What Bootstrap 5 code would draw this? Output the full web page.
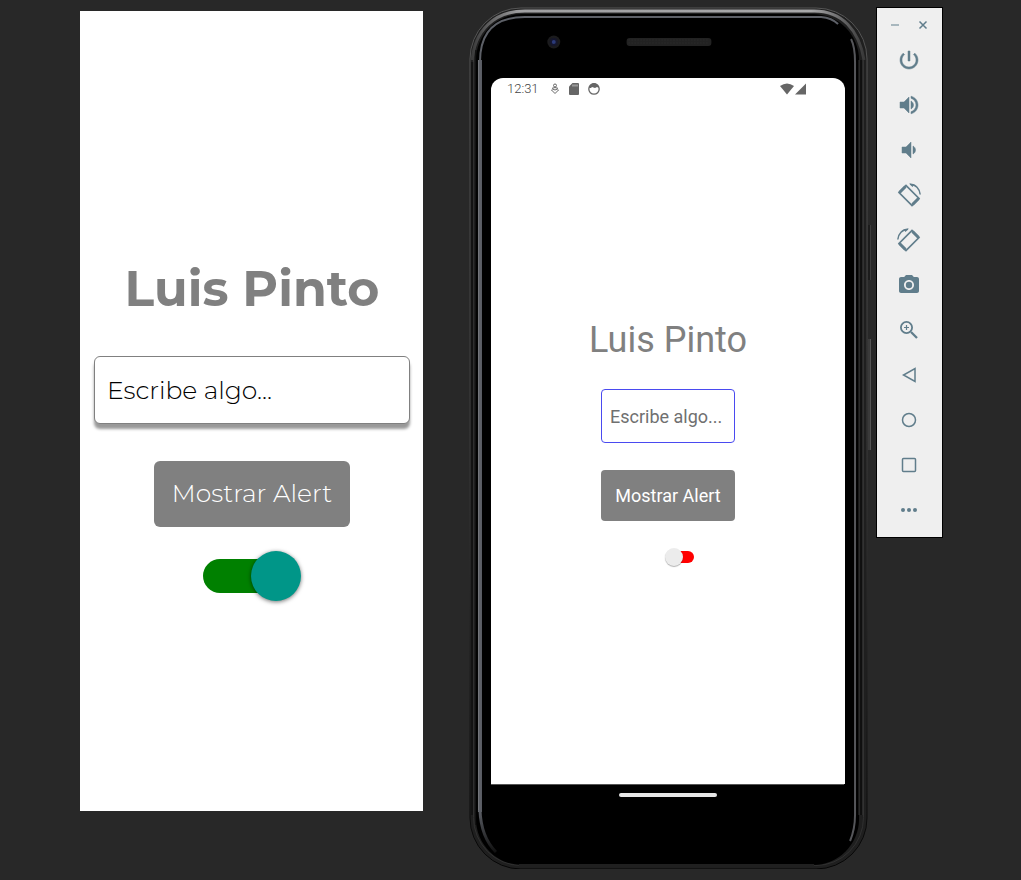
<!DOCTYPE html>
<html lang="es">
<head>
<meta charset="utf-8">
<meta name="viewport" content="width=device-width, initial-scale=1">
<title>Luis Pinto</title>
<link href="https://cdn.jsdelivr.net/npm/bootstrap@5.3.0/dist/css/bootstrap.min.css" rel="stylesheet">
<style>
  body { background: #282828; font-family: Roboto, "Liberation Sans", sans-serif; }
  .desk { display: grid; grid-template-columns: minmax(0, 343fr) minmax(0, 453fr) 67px; padding: 7px 78px 0 80px; min-height: 100vh; align-items: start; }
  .preview { margin-top: 4px; min-height: calc(100vh - 80px); padding: 248px 13px 0 14px; font-family: Montserrat, Inter, sans-serif; }
  .preview h1 { font-size: 49px; line-height: 60px; font-weight: 700; color: #808080; }
  .preview .field { height: 68px; margin-top: 37px; padding: 0 12px; border: 1px solid #808080; border-radius: 6px; font-size: 25px; font-weight: 300; color: #000; box-shadow: 0 5px 3px #999; }
  .preview .field::placeholder { color: #000; opacity: 1; }
  .preview .action { height: 66px; width: 196px; margin-top: 37px; font-size: 25px; font-weight: 300; border-radius: 6px; }
  .action { background: #808080; color: #fff; padding: 0; border: 0; }
  .toggle { appearance: none; position: relative; margin: 0; display: block; }
  .toggle::before, .toggle::after { content: ""; position: absolute; }
  .toggle::after { border-radius: 50%; }
  .toggle-lg { width: 98px; height: 50px; margin-top: 24px; }
  .toggle-lg::before { inset: 8px 10px 8px 0; border-radius: 17px; background: green; }
  .toggle-lg::after { width: 50px; height: 50px; right: 0; background: #009688; box-shadow: 0 1px 4px rgba(0,0,0,.55); }
  .toggle-sm { width: 29px; height: 18px; margin: 27px 0 0 23px; }
  .toggle-sm::before { inset: 3px 0 3px 5px; border-radius: 6px; background: red; }
  .toggle-sm::after { width: 18px; height: 18px; left: 0; background: #ececec; box-shadow: 0 1px 1px rgba(0,0,0,.3); }
  .phone { margin-left: 45px; margin-right: 8px; min-height: calc(100vh - 18px); padding: 71px 23px 0 23px; }
  .frame { z-index: 0; }
  .screen { z-index: 1; background: #fff; border-radius: 12px 12px 0 0; min-height: calc(100vh - 174px); }
  .status { height: 22px; padding: 0 38px 0 16px; font-size: 13px; line-height: 22px; font-weight: 300; color: #444; }
  .screen h2 { font-size: 36px; line-height: 44px; font-weight: 400; color: #808080; margin-top: 218px; }
  .screen .field { width: 134px; height: 54px; margin-top: 27px; padding: 0 8px; border: 1px solid #4a4af0; border-radius: 4px; font-size: 18px; color: #666; }
  .screen .field::placeholder { color: #707070; opacity: 1; }
  .screen .action { width: 134px; height: 51px; margin-top: 27px; font-size: 18px; border-radius: 4px; }
  .homebar { z-index: 1; width: 98px; height: 4px; border-radius: 2px; background: #e6e6e6; margin-top: 9px; }
  .tools { background: #efefef; border: 1px solid #000; height: 531px; padding-right: 2px; color: #607d8b; }
  .tools button { border: 0; background: none; color: inherit; padding: 0; display: flex; align-items: center; justify-content: center; }
  .wide { width: 100%; height: 45px; }
  .slim { width: 28px; height: 25px; }
</style>
</head>
<body>
<main class="desk">
  <section class="preview bg-white d-flex flex-column align-items-center">
    <h1 class="m-0">Luis Pinto</h1>
    <input class="field w-100" type="text" placeholder="Escribe algo..." aria-label="Escribe algo">
    <button type="button" class="btn action">Mostrar Alert</button>
    <input class="toggle toggle-lg" type="checkbox" role="switch" aria-label="Activar" checked>
  </section>

  <section class="phone position-relative d-flex flex-column">
    <svg class="frame position-absolute top-0 start-0 w-100 h-100" viewBox="468 7 401 862" preserveAspectRatio="none" fill="none" aria-hidden="true">
      <defs>
        <linearGradient id="rim" x1="0" y1="0" x2="0" y2="1"><stop offset="0" stop-color="#555"/><stop offset=".5" stop-color="#3b3b3b"/><stop offset="1" stop-color="#050505"/></linearGradient>
        <linearGradient id="shine" x1="468" x2="868" y1="0" y2="0" gradientUnits="userSpaceOnUse"><stop offset="0" stop-color="#333"/><stop offset=".13" stop-color="#a0a0a2"/><stop offset=".86" stop-color="#a8a8aa"/><stop offset="1" stop-color="#333"/></linearGradient>
        <linearGradient id="fade" x1="0" x2="0" y1="810" y2="852" gradientUnits="userSpaceOnUse"><stop offset="0" stop-color="#5d6067"/><stop offset="1" stop-color="#111"/></linearGradient>
      </defs>
      <rect x="470" y="8" width="398" height="861" rx="51" fill="#1f1f1f" stroke="url(#rim)"/>
      <rect x="473.500" y="12.500" width="391" height="853" rx="48" stroke="#303030"/>
      <path d="M472 62C474 30 495 11 525 11H815C843 11 860 30 865 60" stroke="url(#shine)" stroke-width="3"/>
      <rect x="476" y="14" width="384" height="851" rx="46" fill="#000"/>
      <path d="M480 62Q480 17 525 17H822Q833 18 839 24" stroke="#5d6067" stroke-width="2"/>
      <path d="M480 60V812" stroke="#5d6067" stroke-width="4"/>
      <path d="M478.500 60V812" stroke="#74767b"/>
      <path d="M480 810Q481 837 496 852" stroke="url(#fade)" stroke-width="3"/>
      <path d="M852 39Q856 47 856 62V815Q856 829 851 841" stroke="#55565a" stroke-width="2"/>
      <path d="M860 60V815M864 60V815" stroke="#353535"/>
      <path d="M862 60V815" stroke="#000"/>
      <path d="M476 50V825M472 60V815" stroke="#080808"/>
      <path d="M519 865.500H815" stroke="#202020" stroke-width="3"/>
      <circle cx="554" cy="42" r="6.500" fill="#1b1b1d"/><circle cx="554" cy="42" r="4" fill="#15162c"/><circle cx="554" cy="42" r="2" fill="#2b3a78"/>
      <rect x="627" y="38" width="85" height="8" rx="3" fill="#222"/><path d="M629 40H710M629 43H710" stroke="#303030" stroke-dasharray="1 2"/>
      <path d="M491 784.500H845" stroke="#555"/>
    </svg>
    <svg class="position-absolute start-100" width="4" height="240" viewBox="0 0 4 240" style="top: 25%" fill="none" aria-hidden="true"><path d="M1.500 2V57" stroke="#1c1c1c" stroke-width="3"/><path d="M2.500 2V57" stroke="#3c3c3c"/><path d="M1.500 116V227" stroke="#3a3a3a" stroke-width="3"/><path d="M2.500 116V227" stroke="#555"/></svg>

    <div class="screen position-relative d-flex flex-column">
      <div class="status d-flex align-items-center">
        <span>12:31</span>
        <svg class="ms-2" width="14" height="14" viewBox="0 0 14 14" fill="none" stroke="#666" aria-hidden="true"><circle cx="8" cy="3.500" r="1.500"/><path d="M8 11.500L4.500 8Q5 6 8 8Q11 6 11.500 8Z"/><path d="M5 6.300Q8 4.800 11 6.300"/></svg>
        <svg class="ms-2" width="10" height="12" viewBox="0 0 10 12" aria-hidden="true"><path d="M3.500 0H9Q10 0 10 1V11Q10 12 9 12H1Q0 12 0 11V3.500Z" fill="#666"/><path d="M4 1.500V3.500M6 1.500V3.500M8 1.500V3.500" stroke="#ccc"/></svg>
        <svg class="ms-2" width="14" height="14" viewBox="0 0 14 14" aria-hidden="true"><circle cx="7" cy="7" r="5.200" fill="none" stroke="#666" stroke-width="1.300"/><path d="M2 6Q3 1 7 1T12 6L10 5L8 6L5 5L4 6Z" fill="#666"/></svg>
        <svg class="ms-auto" width="28" height="14" viewBox="0 0 28 14" fill="#666" aria-hidden="true"><path d="M1 4Q8-1 15 4L8 12.500Z"/><path d="M27 1.500V12.500H16Z"/></svg>
      </div>
      <div class="d-flex flex-column align-items-center">
        <h2 class="mb-0">Luis Pinto</h2>
        <input class="field" type="text" placeholder="Escribe algo..." aria-label="Escribe algo">
        <button type="button" class="btn action">Mostrar Alert</button>
        <input class="toggle toggle-sm" type="checkbox" role="switch" aria-label="Activar">
      </div>
    </div>
    <div class="homebar position-relative align-self-center"></div>
  </section>

  <aside class="tools d-flex flex-column">
    <div class="d-flex justify-content-center pt-1">
      <button type="button" class="slim" aria-label="Minimizar"><svg width="10" height="10" viewBox="0 0 10 10" stroke="#90a4ae" stroke-width="1.500"><path d="M1 5H9"/></svg></button>
      <button type="button" class="slim" aria-label="Cerrar"><svg width="10" height="10" viewBox="0 0 10 10" stroke="currentColor" stroke-width="1.500"><path d="M1.500 1.500L8.500 8.500M8.500 1.500L1.500 8.500"/></svg></button>
    </div>
    <button type="button" class="wide" aria-label="Encender"><svg width="24" height="24" viewBox="0 0 24 24" fill="currentColor" stroke="currentColor" stroke-width=".5"><path d="M13 3h-2v10h2V3zm4.830 2.170l-1.420 1.420C17.990 7.860 19 9.810 19 12c0 3.870-3.130 7-7 7s-7-3.130-7-7c0-2.190 1.010-4.140 2.580-5.420L6.170 5.170C4.230 6.820 3 9.260 3 12c0 4.970 4.030 9 9 9s9-4.030 9-9c0-2.740-1.230-5.180-3.170-6.830z"/></svg></button>
    <button type="button" class="wide" aria-label="Subir volumen"><svg width="24" height="24" viewBox="0 0 24 24" fill="currentColor" stroke="currentColor" stroke-width=".5"><path d="M3 9v6h4l5 5V4L7 9H3zm13.500 3c0-1.770-1.020-3.290-2.500-4.030v8.050c1.480-.73 2.500-2.250 2.500-4.020zM14 3.230v2.060c2.890.86 5 3.540 5 6.710s-2.110 5.850-5 6.710v2.060c4.010-.91 7-4.490 7-8.770s-2.990-7.860-7-8.770z"/></svg></button>
    <button type="button" class="wide" aria-label="Bajar volumen"><svg width="24" height="24" viewBox="0 0 24 24" fill="currentColor" stroke="currentColor" stroke-width=".5"><path d="M18.500 12c0-1.770-1.020-3.290-2.500-4.030v8.050c1.480-.73 2.500-2.250 2.500-4.020zM5 9v6h4l5 5V4L9 9H5z"/></svg></button>
    <button type="button" class="wide" aria-label="Girar a la izquierda"><svg width="24" height="24" viewBox="0 0 24 24" fill="none" stroke="currentColor"><path d="M2 9.500L9 2.500L22 15.500L15 22.500Z" stroke-width="1.700"/><path d="M2.500 9.500L8.500 3.500M15.500 21.500L21.500 15.500" stroke-width="3"/><path d="M13 1.200C18.500 1.200 22.800 6 23.200 11.500" stroke-width="1.500"/><path d="M12 .5L17.500 1.500L15.500 4Z" fill="currentColor" stroke="none"/></svg></button>
    <button type="button" class="wide" aria-label="Girar a la derecha"><svg width="24" height="24" viewBox="0 0 24 24" fill="none" stroke="currentColor"><path d="M22 9.500L15 2.500L2 15.500L9 22.500Z" stroke-width="1.700"/><path d="M21.500 9.500L15.500 3.500M8.500 21.500L2.500 15.500" stroke-width="3"/><path d="M11 1.200C5.500 1.200 1.200 6 .8 11.500" stroke-width="1.500"/><path d="M12 .5L6.500 1.500L8.500 4Z" fill="currentColor" stroke="none"/></svg></button>
    <button type="button" class="wide" aria-label="Captura"><svg width="24" height="24" viewBox="0 0 24 24" fill="currentColor"><circle cx="12" cy="12" r="3.200"/><path d="M9 2L7.170 4H4c-1.100 0-2 .9-2 2v12c0 1.100.9 2 2 2h16c1.100 0 2-.9 2-2V6c0-1.100-.9-2-2-2h-3.170L15 2H9zm3 15c-2.760 0-5-2.240-5-5s2.240-5 5-5 5 2.240 5 5-2.240 5-5 5z"/></svg></button>
    <button type="button" class="wide" aria-label="Ampliar"><svg width="24" height="24" viewBox="0 0 24 24" fill="none" stroke="currentColor"><circle cx="9.500" cy="9.500" r="5.600" stroke-width="1.800"/><path d="M14 14L20 20" stroke-width="2.300"/><path d="M9.500 7V12M7 9.500H12" stroke-width="1.200"/></svg></button>
    <button type="button" class="wide" aria-label="Atrás"><svg width="24" height="24" viewBox="0 0 24 24" fill="none" stroke="currentColor" stroke-width="1.500"><path d="M18 5.500V18.500L6.500 12Z"/></svg></button>
    <button type="button" class="wide" aria-label="Inicio"><svg width="24" height="24" viewBox="0 0 24 24" fill="none" stroke="currentColor" stroke-width="1.500"><circle cx="12" cy="12" r="6.500"/></svg></button>
    <button type="button" class="wide" aria-label="Recientes"><svg width="24" height="24" viewBox="0 0 24 24" fill="none" stroke="currentColor" stroke-width="1.500"><rect x="5.500" y="5.500" width="13" height="13" rx="1"/></svg></button>
    <button type="button" class="wide" aria-label="Más"><svg width="24" height="24" viewBox="0 0 24 24" fill="currentColor"><circle cx="6" cy="12" r="2"/><circle cx="12" cy="12" r="2"/><circle cx="18" cy="12" r="2"/></svg></button>
  </aside>
</main>
<script src="https://cdn.jsdelivr.net/npm/bootstrap@5.3.0/dist/js/bootstrap.bundle.min.js"></script>
</body>
</html>
